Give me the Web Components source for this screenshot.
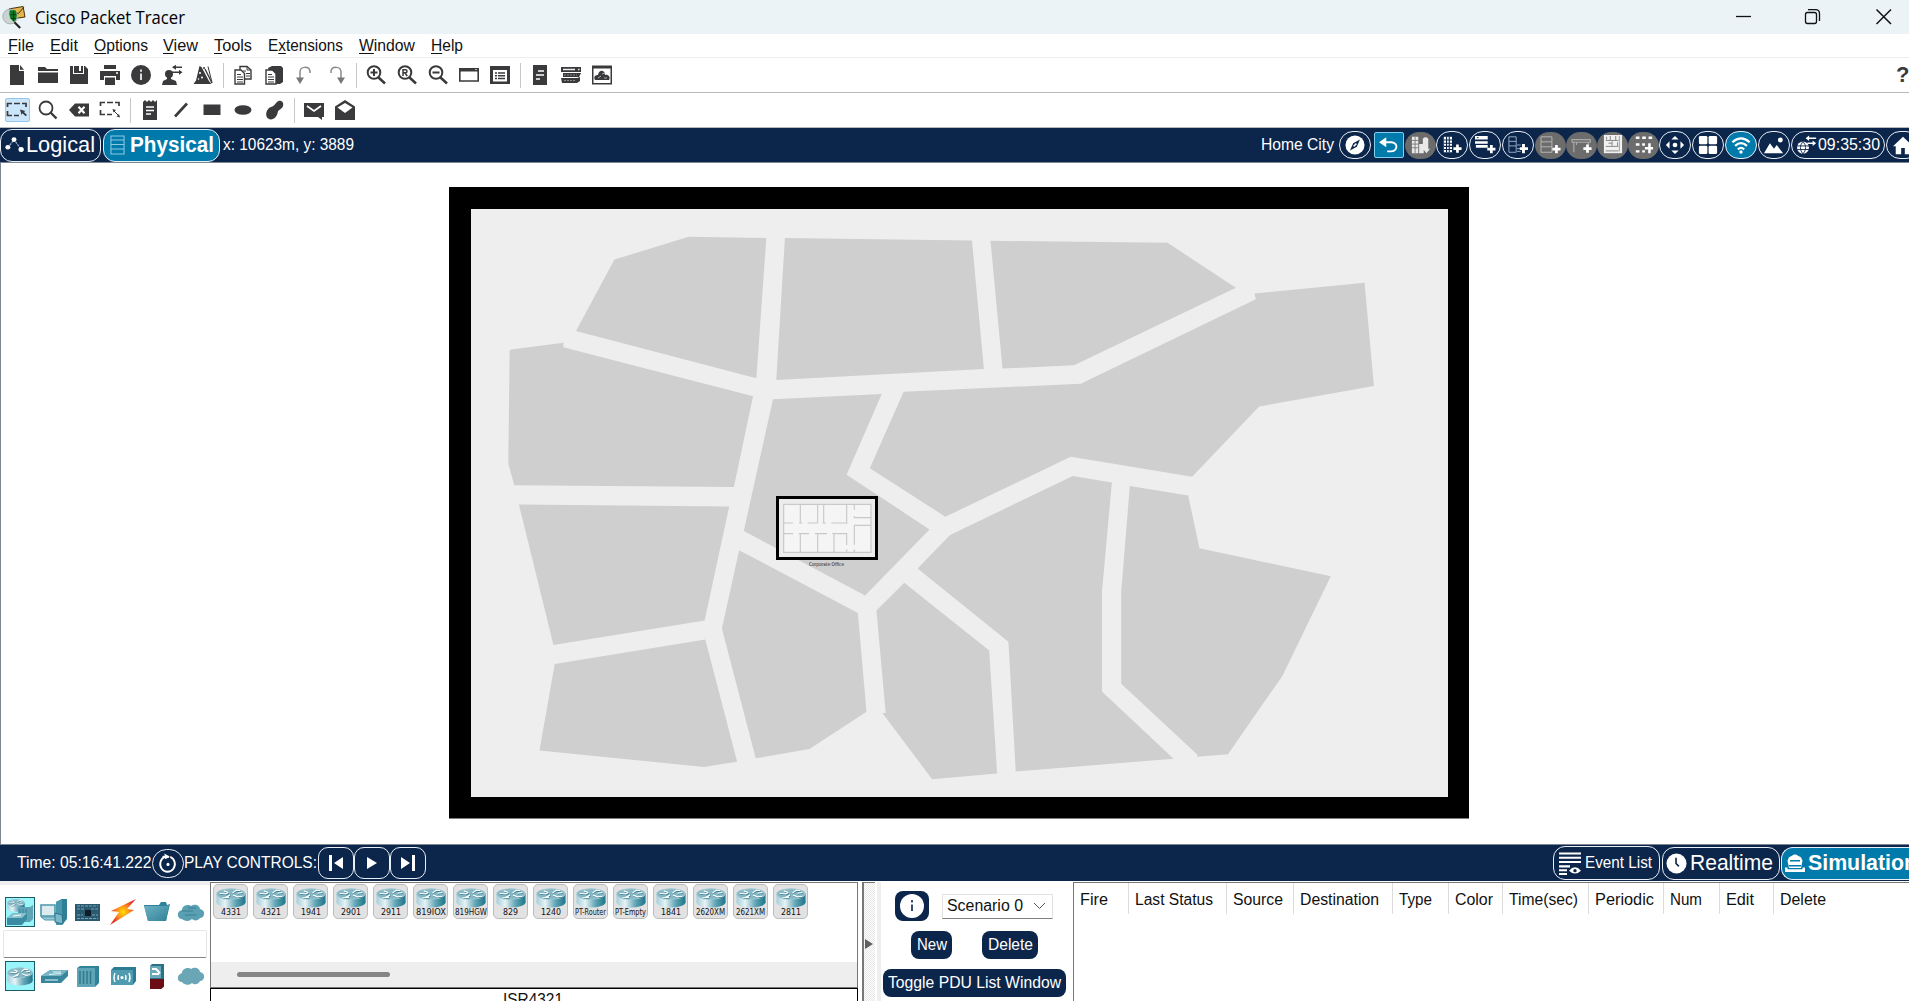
<!DOCTYPE html>
<html lang="en">
<head>
<meta charset="utf-8">
<title>Cisco Packet Tracer</title>
<style>
html,body{margin:0;height:100%;overflow:hidden;background:#fff}
</style>
</head>
<body>
<pt-app></pt-app>
<script>
const D='#3a3a3c';
const router=`<ellipse cx="14.5" cy="15" rx="14" ry="5.500" fill="url(#rb)"/><path d="M.5 6v9h28V6z" fill="url(#rb)"/><ellipse cx="14.5" cy="6.3" rx="14" ry="5.800" fill="#86b7c4"/><ellipse cx="14.5" cy="6.3" rx="13.6" ry="5.400" fill="none" stroke="#a8ced8" stroke-width=".6"/><path d="M3.500 5.800l6 .4 2-1.200M7.500 3l4.500 1.800M12.500 9.800l-6 .6M13.500 7.500L9 10M16 5.200l3.500-2.800 4 .2M16.500 7.500l4.500 1.800 4.500-.6M21 5.500l4.500-.9" fill="none" stroke="#2d7185" stroke-width="1" transform="translate(.4 .8)"/><path d="M3.500 5.800l6 .4 2-1.200M7.500 3l4.500 1.800M12.500 9.800l-6 .6M13.500 7.500L9 10M16 5.200l3.500-2.800 4 .2M16.500 7.500l4.500 1.800 4.500-.6M21 5.500l4.500-.9" fill="none" stroke="#fff" stroke-width="1.200"/>`;
const defs=`<defs><linearGradient id="rb"><stop offset="0" stop-color="#a5d0dc"/><stop offset=".3" stop-color="#e6f3f6"/><stop offset=".65" stop-color="#62a5b6"/><stop offset="1" stop-color="#1f7589"/></linearGradient><linearGradient id="tb" x2="1" y2="1"><stop offset="0" stop-color="#6fb2c3"/><stop offset="1" stop-color="#2f8299"/></linearGradient><radialGradient id="bolt"><stop offset="0" stop-color="#ffe000"/><stop offset=".5" stop-color="#ff8a1e"/><stop offset="1" stop-color="#e03226"/></radialGradient></defs>`;
/* name: [width, height, markup] */
const ICONS={
 app:[24,24,`<path d="M7.500 3L22 .5l2 11-14 2z" fill="#e3b54b" stroke="#3b2c0c"/><path d="M8 3.500l9 4.500 6-7" fill="none" stroke="#3b2c0c"/><circle cx="8.500" cy="11" r="7.700" fill="#c9d3d1" stroke="#a5b0ae"/><path d="M8 4.500h6c2 4 2 9-1 12-5-2-6-7-5-12z" fill="#0b7a22"/><path d="M9 9h6M9 13h6M12 5v11" stroke="#053d10"/><path d="M13 17l6 6" stroke="#222" stroke-width="2.200"/>`],
 new:[20,20,`<path d="M3 0h9v6h5v14H3z" fill="${D}"/><path d="M13 0l4 4.800h-4z" fill="${D}"/>`],
 open:[20,20,`<path d="M0 2h7l2 2h11v2H0zM0 7.500h20V18H0z" fill="${D}"/>`],
 save:[20,20,`<path d="M1 1h3v8h11V1h1l3 3v15H1z" fill="${D}"/><path d="M5 1h5v5h2V1h2v7H5z" fill="${D}"/>`],
 print:[20,20,`<path d="M4 0h12v4H4zM0 6h20v9h-4v-4H4v4H0zM5 12.500h10V20H5z" fill="${D}"/><path d="M16 8h2" stroke="#fff" stroke-width="1.500"/>`],
 info:[20,20,`<circle cx="10" cy="10" r="10" fill="${D}"/><path d="M10 4.500v2.200M10 8.500V15" stroke="#ddd" stroke-width="2"/>`],
 user:[20,20,`<circle cx="7" cy="9" r="4" fill="${D}"/><path d="M5 11h4v3l5 2 1 4H0l1-4 4-2z" fill="${D}"/><path d="M11 2.300h9M10 7.300h9" stroke="${D}" stroke-width="1.600"/><path d="M14-.2v5l-4-2.500zM17 4.800v5l3.500-2.500z" fill="${D}"/>`],
 wizard:[20,20,`<path d="M6.500 1l2 1 7.500 14 2.500 3H.5L3 15.500z" fill="${D}"/><path d="M12 4l7 14" stroke="${D}" stroke-width="1.400"/><path d="M15 1.500l4 16" stroke="${D}"/><circle cx="7" cy="8" r="1" fill="#fff"/><circle cx="9" cy="12.500" r="1" fill="#fff"/><circle cx="5.500" cy="14" r=".8" fill="#fff"/><circle cx="11" cy="3" r="1" fill="${D}"/>`],
 copy:[20,20,`<g fill="#fff" stroke="${D}" stroke-width="1.400"><path d="M7 1.500h7l4 3.500v9H7z"/><path d="M2 5h6l3.500 3.500V19H2z"/></g><path d="M14 1.500V5h4M4 9.500h4M4 12h6M4 14.500h6M4 17h6M10 6h3M13 8.500h4M13 11h4" stroke="${D}" fill="none"/>`],
 paste:[20,20,`<path d="M4 3l4-2h9l2 2v14l-3 2H9z" fill="${D}"/><path d="M2 5h6.500L12 8.500V19H2z" fill="#fff" stroke="${D}" stroke-width="1.400"/><path d="M4 9.500h4M4 12h6M4 14.500h6M4 17h6" stroke="${D}"/>`],
 undo:[20,20,`<path d="M5 14V7c0-6 9-6 10-1v2" fill="none" stroke="#8a8a8a" stroke-width="1.500"/><path d="M1 12.500h8L5 19z" fill="#777"/>`],
 redo:[20,20,`<path d="M15 14V7c0-6-9-6-10-1v2" fill="none" stroke="#8a8a8a" stroke-width="1.500"/><path d="M11 12.500h8L15 19z" fill="#777"/>`],
 zin:[20,20,`<circle cx="8" cy="7.500" r="6.300" fill="none" stroke="${D}" stroke-width="2"/><path d="M12.500 12.500l6.500 6" stroke="${D}" stroke-width="2.500"/><path d="M4.500 7.500h7M8 4v7" stroke="${D}" stroke-width="2"/>`],
 zr:[20,20,`<circle cx="8" cy="7.500" r="6.300" fill="none" stroke="${D}" stroke-width="2"/><path d="M12.500 12.500l6.500 6" stroke="${D}" stroke-width="2.500"/><path d="M6 11V4.800h2.500c2 0 2 3 0 3H6M8 8l2.300 3" fill="none" stroke="${D}" stroke-width="1.500"/>`],
 zout:[20,20,`<circle cx="8" cy="7.500" r="6.300" fill="none" stroke="${D}" stroke-width="2"/><path d="M12.500 12.500l6.500 6" stroke="${D}" stroke-width="2.500"/><path d="M4.500 7.500h7" stroke="${D}" stroke-width="2"/>`],
 view:[20,20,`<path d="M.8 4h18.400v12H.8z" fill="none" stroke="${D}" stroke-width="1.600"/><path d="M0 3h20v3.500H0z" fill="${D}"/><path d="M16 4.500h2" stroke="#bbb"/>`],
 list:[20,20,`<path d="M0 1h20v18H0z" fill="${D}"/><path d="M3 5h14v11.500H3z" fill="#fff"/><path d="M8 8h7M8 10.800h7M8 13.500h7M5 8h2M5 10.800h2M5 13.500h2" stroke="${D}" stroke-width="1.600"/>`],
 doc:[20,20,`<path d="M3 0h14v20H3z" fill="${D}"/><path d="M8 6h6M6 10h8M6 14h4" stroke="#fff" stroke-width="1.500"/>`],
 rack:[20,20,`<path d="M0 2h20v5H0zM2 8h18l-2 4H2zM0 13h16l3-1v4l-3 2H1z" fill="${D}"/><path d="M2 4.500h12M17 4.500h1.500" stroke="#eee" stroke-width="1.300"/><path d="M3 10h13M3 15.500h11" stroke="#888" stroke-dasharray="2 1"/>`],
 cloudwin:[20,20,`<path d="M0 .5h20v19H0z" fill="${D}"/><path d="M1.500 3.500h17V18h-17z" fill="#fff"/><path d="M3 15c-2-4 1-5 3-5 1-6 7-5 7 0 3-1 6 2 4 5z" fill="${D}"/><path d="M6 13l3-2M10 9l3-1M12 13h3" stroke="#aaa"/>`],
 sel:[22,20,`<g fill="none" stroke="${D}" stroke-width="1.700"><path d="M1.500 7V3.500H6M8 3.500h6M16 3.500h4V7M1.500 11v4.500H6M8 15.500h5"/></g><path d="M14 9.500l5.500 1.500-1.600 1L21 15l-1.300 1.300-3.200-3.100-1 1.800z" fill="${D}"/>`],
 search:[20,20,`<circle cx="8" cy="8" r="6.500" fill="none" stroke="${D}" stroke-width="1.800"/><path d="M12.500 12.500l6 6" stroke="${D}" stroke-width="2.400"/>`],
 del:[20,20,`<path d="M0 10l6-6.500h14v13H6z" fill="${D}"/><path d="M9.500 6.800l6 6.400M15.500 6.800l-6 6.400" stroke="#fff" stroke-width="2.200"/>`],
 resize:[22,20,`<g fill="none" stroke="${D}" stroke-width="1.700"><path d="M1.500 6V2.500H6M8 2.500h6M16 2.500h4V6M1.500 10v4.500H6M8 14.500h5"/></g><path d="M14 10l6 6" stroke="${D}"/><path d="M13.500 9l3.500 1-2.500 2.500zM21 17.500l-3.500-1 2.500-2.500z" fill="${D}"/>`],
 note:[20,20,`<path d="M3 2l2-2 2 2 2-2 2 2 2-2 2 2 2-2v20H3z" fill="${D}"/><path d="M6 7h8M6 10.500h8M6 14h5" stroke="#fff" stroke-width="1.400"/>`],
 line:[20,20,`<path d="M4 16.500L16 3.500" stroke="${D}" stroke-width="2.600"/>`],
 rect:[20,20,`<path d="M1.500 4.500h17v10.500h-17z" fill="${D}"/>`],
 oval:[20,20,`<ellipse cx="10" cy="10" rx="8.500" ry="4.800" fill="${D}"/>`],
 blob:[20,20,`<path d="M12.500 2.500c3-3.500 8-1 6.500 3.500-1 3.500-5 3.500-5.300 6.500-.6 4.500-5 8.500-9.200 6.300C.5 16.500 2 8.500 7 7c3-.8 3.500-2.500 5.500-4.500z" fill="${D}"/>`],
 mail:[20,20,`<path d="M0 3h20v14h-2v3l-4-3H0z" fill="${D}"/><path d="M3 6l7 5 7-5" fill="none" stroke="#fff" stroke-width="1.700"/>`],
 mailo:[20,20,`<path d="M0 6.500L10 0l10 6.500V20H0z" fill="${D}"/><path d="M2.500 7.500L10 3l7.500 4.500L10 13z" fill="#fff"/>`],
 nodes:[20,20,`<path d="M3 13L9.500 4 17 15" fill="none" stroke="#9fb4cc" stroke-width="1.300" stroke-dasharray="2.500 1"/><circle cx="9.500" cy="4" r="2.600" fill="#fff"/><circle cx="3" cy="12.500" r="2.600" fill="#fff"/><circle cx="17" cy="15" r="2.800" fill="#fff"/>`],
 shelf:[16,20,`<path d="M1 1h14v18H1zM1 5h14M1 9.500h14M1 14h14" fill="none" stroke="#8ecae3" stroke-width="1.100"/>`],
 compass:[22,22,`<circle cx="11" cy="11" r="10.500" fill="#fff"/><path d="M16.500 5L13 13l-7.500 4L9 9z" fill="#0c264b"/><path d="M9.500 12.500l3-3" stroke="#fff" stroke-width="1.600"/>`],
 back:[22,22,`<path d="M2.500 8H14c8 1 6 10-1 10H9" fill="none" stroke="#fff" stroke-width="2"/><path d="M0 8l8-5.500v11z" fill="#fff"/>`],
 city:[22,22,`<path d="M1 2h7v18H1zM9 10h5v10H9zM13 4q3-3 6 0v11h2l-4 5-4-5z" fill="#e9e9e9"/><path d="M1 6h7M1 10h7M1 14h7M4.500 2v18" stroke="#777"/>`],
 bplus:[22,22,`<path d="M2 2h9v17H2z" fill="#fff"/><path d="M2 5.500h9M2 9h9M2 12.500h9M2 16h9M5 2v17M8 2v17" stroke="#0c264b" stroke-width="1.200"/><path d="M17 10.500v9M12.500 15h9" stroke="#fff" stroke-width="3"/>`],
 rplus:[22,22,`<path d="M0 1h14v4H0zM0 7h14v2.500H0zM1 11h13v3H1z" fill="#fff"/><path d="M2 3h2" stroke="#0c264b"/><path d="M18 11v9M13.500 15.500h9" stroke="#fff" stroke-width="3"/>`],
 splus:[22,22,`<path d="M1 2h8v17H1zM1 7h8M1 12h8" fill="none" stroke="#9fb4cc"/><path d="M10 11h4M10 15h4M10 18h4" stroke="#9fb4cc"/><path d="M17 10v10M13 15h9" stroke="#fff" stroke-width="3.200"/>`],
 shplus:[22,22,`<path d="M0 2h12v17H0zM0 7.500h12M0 13h12" fill="none" stroke="#bbb"/><path d="M17 11v9M12.500 15.500h9" stroke="#fff" stroke-width="3"/>`],
 tplus:[22,22,`<path d="M0 5h20v3H0zM2 8v11M18 8v11M5 8v3" fill="none" stroke="#aaa" stroke-width="1.300"/><path d="M17 10.500v9M12.500 15h9" stroke="#fff" stroke-width="3"/>`],
 cab:[22,22,`<path d="M1 0h20v20H1z" fill="#f1f1f1"/><path d="M3 6h14M3 12.500h14M3 17.500h14M8 1v5M14 1v5M4 2v3M10 7v5M16 8v4M6 9h4" stroke="#888" stroke-width="1.100"/><path d="M18 1v17" stroke="#999"/>`],
 dots:[22,22,`<path d="M2 3h18M2 10.500h10M2 18h10" stroke="#fff" stroke-width="2.600" stroke-dasharray="4 3"/><path d="M17 9v11M12 14.500h9" stroke="#fff" stroke-width="2.800"/>`],
 move:[22,22,`<path d="M11 1l4 4H7zM11 21l4-4H7zM1 11l4-4v8zM21 11l-4-4v8z" fill="#fff"/><circle cx="11" cy="11" r="2.600" fill="#fff"/>`],
 grid:[22,22,`<g fill="#fff"><rect x="1" y="1" width="9.300" height="9.300" rx="1.500"/><rect x="11.700" y="1" width="9.300" height="9.300" rx="1.500"/><rect x="1" y="11.700" width="9.300" height="9.300" rx="1.500"/><rect x="11.700" y="11.700" width="9.300" height="9.300" rx="1.500"/></g>`],
 wifi:[22,22,`<g fill="none" stroke="#fff" stroke-width="2.500"><path d="M1.500 8q9.500-8.500 19 0M4.500 12q6.500-6 13 0M7.500 15.700q3.500-3 7 0"/></g><circle cx="11" cy="18.800" r="1.900" fill="#fff"/>`],
 mtn:[22,22,`<path d="M0 20l6.500-11 4.500 6 3-4 7 9z" fill="#fff"/><circle cx="18" cy="5.500" r="2.700" fill="#fff"/>`],
 globe:[24,22,`<circle cx="8" cy="14" r="6.800" fill="#fff"/><path d="M1 12h14M1 16h14M8 7q-6 7 0 14M8 7q6 7 0 14" fill="none" stroke="#0c264b"/><path d="M13 3.500h10M13 9h8" stroke="#fff" stroke-width="1.700"/><path d="M15 .5v6l-4-3zM19 6v6l4-3z" fill="#fff"/>`],
 home:[22,22,`<path d="M0 12L11 1l11 11h-3v9h-6v-7H9v7H3v-9z" fill="#fff"/>`],
 reset:[24,24,`<path d="M8.500 5.200a8 8 0 1 0 6 0" fill="none" stroke="#fff" stroke-width="2"/><path d="M6 5h7" stroke="#fff" stroke-width="2"/><path d="M8 1.500l6 3.500-5 2.500z" fill="#fff"/><circle cx="12" cy="13" r="1.700" fill="#fff"/>`],
 prev:[18,18,`<path d="M2 1h3v16H2zM16 3v12L7 9z" fill="#fff"/>`],
 play:[18,18,`<path d="M4 3v12l10-6z" fill="#fff"/>`],
 next:[18,18,`<path d="M13 1h3v16h-3zM2 3v12l9-6z" fill="#fff"/>`],
 events:[22,24,`<path d="M0 1.500h22M0 6h22M0 10.500h22M0 15h11M0 19h8M0 23h8" stroke="#fff" stroke-width="2.200"/><path d="M10 19.500q6-7 12 0-6 6-12 0z" fill="#fff"/><circle cx="16" cy="19.500" r="1.700" fill="#0c264b"/>`],
 clock:[22,22,`<circle cx="11" cy="11" r="10.500" fill="#fff"/><path d="M10.500 5v6l3 3" fill="none" stroke="#0c264b" stroke-width="1.700"/>`],
 sim:[20,20,`<path d="M7 2q3-3 6 0l3 1.500 1.500 4-1.500 8H4l-1.500-8L4 3.500zM0 15h2.500v2h15v-2H20v5H0z" fill="#fff"/><path d="M5 7.500h10M4 13h12" stroke="#007aaa" stroke-width="1.500"/>`],
 netdev:[28,28,`<g transform="translate(1 1) scale(.62)">${router}</g><path d="M12 9h12l3-2v14l-3 3H12z" fill="#5fa5b7"/><path d="M14 11v10M17 11v10M20 11v10" stroke="#397f92"/><path d="M1 20l6-5h14v6l-5 6H1z" fill="#3b8ca2"/><path d="M1 20l6-5h14l-5 5z" fill="#86c1ce"/><path d="M7 18l8-1" stroke="#fff"/>`],
 pc:[28,28,`<path d="M16 4l6-3h5v20l-5 6h-6z" fill="#2f8097"/><path d="M16 4l6-3v26h-6z" fill="#4a98ad"/><path d="M1 7h14v11H1z" fill="#dcebef" stroke="#4b98ac" stroke-width="1.600"/><path d="M1 19h14l3 3H5z" fill="#9acbd7" stroke="#4b98ac"/><path d="M15 15l7 2 1 9-8-2z" fill="#7ab9c9" stroke="#2f7388"/>`],
 board:[28,28,`<path d="M1 6h25v17H1z" fill="#2b5a70"/><path d="M3 8h21M3 11h7M17 11h7M3 20.500h21M3 17h6M18 17h6" stroke="#6ea7b8" stroke-width="1.100" stroke-dasharray="3 1"/><path d="M11 12h6v6h-6z" fill="#101c28"/>`],
 bolt:[28,28,`<path d="M27 1L2 13l8 1L1 27l24-15-7-1z" fill="url(#bolt)"/>`],
 folder:[28,28,`<path d="M1 7h15l2-3h5l1 3 3-1-4 17H5z" fill="#2f8299"/><path d="M1 8h22l3-1-3 16H5z" fill="url(#tb)"/>`],
 cloud:[28,28,`<path d="M5 21c-5 0-6-8 0-9 0-5 7-6 9-4 4-3 9 0 9 3 6 1 5 9 0 9-2 3-6 3-8 1-3 3-8 2-10 0z" fill="#5aa0b3"/><path d="M5 13h11M8 17h12M11 10h8" stroke="#3a7e91"/>`],
 cloud2:[28,28,`<path d="M5 20c-5 0-6-7 0-9 0-5 7-6 9-4 4-3 9 0 9 3 6 1 5 9 0 9-2 4-6 4-8 2-3 3-8 2-10-1z" fill="#6aa6b5"/>`],
 routerbig:[28,28,`<g transform="translate(1 5) scale(.9)">${router}</g>`],
 switch:[28,28,`<path d="M1 14l9-6h18v6l-7 7H1z" fill="#37869c"/><path d="M1 14l9-6h18l-7 6z" fill="#78b6c5"/><path d="M9 12.500l12-1M13 10h8M5 18h13" stroke="#e8f5f7"/>`],
 hub:[28,28,`<path d="M3 6l3-2h19v17l-4 4H3z" fill="#2f8299"/><path d="M3 6h18v19H3z" fill="#5ea5b7"/><path d="M6 9v13M9.500 9v13M13 9v13M16.500 9v13" stroke="#36788c" stroke-width="1.500"/>`],
 wap:[28,28,`<path d="M2 8l3-3h22v14l-3 4H2z" fill="#2b7c93"/><path d="M2 8h22v15H2z" fill="#4f9bb0"/><path d="M6 11q-2 4.500 0 9M9.500 13q-1 2.500 0 5M16.500 13q1 2.500 0 5M20 11q2 4.500 0 9" fill="none" stroke="#fff" stroke-width="1.400"/><circle cx="13" cy="15.500" r="1.600" fill="#fff"/>`],
 fw:[28,28,`<path d="M7 4l2-2h12v23l-3 2H7z" fill="#2c7186"/><path d="M7 4h11v12H7z" fill="#6aa9b9"/><path d="M7 17h14v7l-3 3H7z" fill="#6c0d14"/><path d="M9 7h4l3 3M9 12h6l2-2" stroke="#fff" stroke-width="2" fill="none"/>`],
 device:[29,21,router]
};
const make=(name,css,html,extra)=>customElements.define(name,class extends HTMLElement{
 constructor(){super();this.attachShadow({mode:'open'})}
 connectedCallback(){this.shadowRoot.innerHTML=`<style>:host{box-sizing:border-box}*{box-sizing:border-box}${css}</style>`+(typeof html==='function'?html(this):html);if(extra)extra(this)}
});
/* sized vector icon */
make('pt-icon',`:host{display:block;flex:none;line-height:0}svg{display:block;overflow:visible}`,el=>{
 const [w,h,m]=ICONS[el.getAttribute('name')];
 const W=el.getAttribute('w')||w,H=el.getAttribute('h')||h;
 return `<svg width="${W}" height="${H}" viewBox="0 0 ${w} ${h}" preserveAspectRatio="none">${/url\(#/.test(m)?defs:''}${m}</svg>`});
make('pt-tool',`:host{display:flex;width:31px;height:100%;align-items:center;justify-content:center;flex:none}div{display:flex;width:25px;height:24px;align-items:center;justify-content:center;border-radius:2px}:host([active]) div{background:#cbe6fb;border:1px solid #94c7ee}`,el=>`<div><pt-icon name="${el.getAttribute('name')}"></pt-icon></div>`);
make('pt-sep',`:host{display:flex;justify-content:center;align-items:center;flex:none;width:9px;height:100%}i{width:1px;height:25px;background:#c8c8c8}`,`<i></i>`);
make('pt-toolbar',`:host{display:flex;padding-left:1.500px;background:#fff;border-bottom:1px solid #b9b9b9}`,`<slot></slot>`);
make('pt-title',`:host{display:flex;height:34px;background:#ebf3f7;align-items:center;padding-left:2px;font:17.500px "Open Sans",sans-serif;color:#000}.t{margin-left:10px;margin-top:-1px}.w{margin-left:auto;display:flex;width:178px;height:34px;align-items:center}svg{display:block}`,
`<pt-icon name="app" w="23" h="23"></pt-icon><pt-label class="t" w="150">Cisco Packet Tracer</pt-label><div class="w"><svg width="178" height="34" fill="none" stroke="#111" stroke-width="1.300"><path d="M5 16.500h15"/><rect x="74.500" y="12.500" width="11" height="11" rx="2"/><path d="M77 9.700h7.500q4 0 4 4V21"/><path d="M145.500 9.500l14.500 14.500M160 9.500L145.500 24" stroke-width="1.500"/></svg></div>`);
make('pt-menu',`:host{display:flex;gap:15.800px;padding:1px 8px 0;height:24px;align-items:center;border-bottom:1px solid #ededed;background:#fff;font:16px "Liberation Sans",Arial,sans-serif;color:#111}u{text-underline-offset:2px}`,
[['<u>F</u>ile',26],['<u>E</u>dit',28],['<u>O</u>ptions',54],['<u>V</u>iew',35],['<u>T</u>ools',38],['E<u>x</u>tensions',75],['<u>W</u>indow',56],['<u>H</u>elp',32]].map(a=>`<pt-label w="${a[1]}">${a[0]}</pt-label>`).join(''));
/* rounded button used in both navy bars */
make('pt-pill',`:host{display:flex;flex:none;align-items:center;justify-content:center;border:1px solid #e8eef5;border-radius:14px;background:#0c264b;color:#fff;height:28px;width:32px;margin-right:1px;font:16px "Liberation Sans",Arial,sans-serif}
:host([tone=gray]){background:#6c6c6c;border-color:#6c6c6c;width:31px;margin-right:0;border-radius:15px;height:27px}:host([tone=blue]){background:#007aaa}:host([tone=sq]){background:#007aaa;border-color:#7fd0ee;border-radius:2px;height:26px;width:30px;margin:0 1px 0 2px}
:host([tab]){height:33px;justify-content:flex-start;border-radius:12px;margin-right:0}`,`<slot></slot>`);
const navIcons=[['compass'],['back','sq'],['city','gray'],['bplus'],['rplus'],['splus'],['shplus','gray'],['tplus','gray'],['cab','gray'],['dots','gray'],['move'],['grid'],['wifi','blue'],['mtn']];
make('pt-nav',`:host{display:flex;height:34px;background:#0c264b;align-items:center;color:#fff;overflow:hidden;font:16px "Liberation Sans",Arial,sans-serif}:host>*,.xy,.city{flex:none}.xy{margin-left:3px;width:131px;overflow:hidden}.city{margin-left:907px;margin-right:5px}.log{width:101px;padding-left:4px;margin-right:2px}.phy{width:117px;padding-left:6px}.big{font-size:22px}.b{font-weight:bold;margin-left:5px}.clk{width:94px;margin-left:0}.home{width:34px;padding-left:6px;justify-content:flex-start}`,
`<pt-pill tab class="log"><pt-icon name="nodes" w="19" h="18"></pt-icon><pt-label class="big" w="69" style="margin-left:2px">Logical</pt-label></pt-pill><pt-pill tab tone="blue" class="phy"><pt-icon name="shelf" w="15" h="20"></pt-icon><pt-label class="big b" w="84">Physical</pt-label></pt-pill><div class="xy"><pt-label w="131">x: 10623m, y: 3889</pt-label></div><pt-label class="city" w="73">Home City</pt-label>`+
navIcons.map(([n,t])=>`<pt-pill ${t?`tone="${t}"`:''}><pt-icon name="${n}" w="20" h="20"></pt-icon></pt-pill>`).join('')+
`<pt-pill class="clk"><pt-icon name="globe" w="21" h="20"></pt-icon><pt-label w="62" style="margin-left:1px">09:35:30</pt-label></pt-pill><pt-pill class="home"><pt-icon name="home" w="20" h="19"></pt-icon></pt-pill>`);
const blocks=['263,195 375,139 492,142 477,486 205,370','520,142 802,148 820,463 507,490','830,149 1097,154 1200,264 956,454 848,462','105,416 186,399 186,410 472,530 443,752 112,748 103,695','1228,278 1394,252 1408,505 1235,555 1134,727 951,678 762,825 648,706 699,519 966,499 1230,292','502,537 666,524 613,722 738,856 641,1018 458,860','119,795 436,800 399,1079 171,1139','173,1186 400,1126 448,1425 398,1438 150,1398','451,907 630,1061 643,1303 557,1394 476,1417 425,1099','700,987 828,1153 840,1454 742,1468 667,1306 672,1306 658,1055','954,725 1013,741 998,1010 998,1253 1106,1418 868,1449 857,1131 720,952 769,870','1040,750 1128,773 1145,902 1343,971 1270,1215 1188,1407 1141,1413 1142,1408 1027,1234 1027,1010'];
make('pt-map',`:host{display:block;height:683px;border:1px solid #7d8590;border-right:0;background:#fff}svg{display:block}`,
`<svg width="1908" height="681" viewBox="1 163 1908 681"><path d="M449 187h1020v631.500H449z"/><path d="M471 209h977v588H471z" fill="#eee"/><g transform="translate(440 180) scale(.66327 .40816)" fill="#cfcfcf">${blocks.map(b=>`<polygon points="${b}"/>`).join('')}</g>
<path d="M776 496h102v64H776z"/><path d="M779 499h96v58h-96z" fill="#ececec"/><g transform="translate(740 480) scale(.33333)"><path d="M131 73h262v144H131z" fill="#f5f5f5" stroke="#c9c9c9" stroke-width="3.500"/><path d="M181 73v55M233 73v55M251 73v55M320 73v58M131 129h28M177 129h10M203 129h30M248 129h10M274 129h46M343 73v17M343 108v5h50M343 194v-58h50M343 208v9M131 161h28M176 161h31M225 161h36M277 161h43v34M181 161v56M233 161v56M282 161v56M320 208v9" fill="none" stroke="#c9c9c9" stroke-width="3.500"/></g>
<text x="809" y="566" font-family="DejaVu Sans,sans-serif" font-size="5" textLength="35" lengthAdjust="spacingAndGlyphs" fill="#111">Corporate Office</text></svg>`);
make('pt-playbar',`:host{display:flex;height:36px;background:#0c264b;align-items:center;color:#fff;padding-left:17px;overflow:hidden;font:16px "Liberation Sans",Arial,sans-serif}.c{width:32px;height:29px;border-radius:15px;margin:0}.p{width:36px;height:32px;margin:0;border-radius:10px}.ev{margin-left:auto;width:107px;height:34px;padding-left:5px;margin-right:2px}.rt{width:118px;padding-left:3px;margin-right:1px}.sm{width:128px;padding-left:3px;border-right:0;border-radius:12px 0 0 12px}.big{font-size:22px;margin-left:3px}.b{font-weight:bold}`,
`<pt-label w="134.500">Time: 05:16:41.222</pt-label><pt-pill class="c"><pt-icon name="reset" w="22" h="23"></pt-icon></pt-pill><pt-label w="133">PLAY CONTROLS:</pt-label><pt-pill class="p" style="margin-left:1px"><pt-icon name="prev"></pt-icon></pt-pill><pt-pill class="p"><pt-icon name="play"></pt-icon></pt-pill><pt-pill class="p"><pt-icon name="next"></pt-icon></pt-pill><pt-pill tab class="ev"><pt-icon name="events" w="22" h="23"></pt-icon><pt-label w="67" style="margin-left:4px">Event List</pt-label></pt-pill><pt-pill tab class="rt"><pt-icon name="clock" w="21" h="21"></pt-icon><pt-label class="big" w="83">Realtime</pt-label></pt-pill><pt-pill tab tone="blue" class="sm"><pt-icon name="sim" w="20" h="18"></pt-icon><pt-label class="big b" w="109">Simulation</pt-label></pt-pill>`);
make('pt-categories',`:host{display:flex;flex-direction:column;width:210px;border-top:4px solid #eee;background:#fff;flex:none}.r{display:flex;gap:4.200px;padding-left:5px;height:30px}.r div{width:30px;height:30px;display:flex;align-items:center;justify-content:center}.r .s{background:#98f6fb;border:1px solid #1b5b68}.a{margin-top:12px}.in{height:28px;width:204px;margin:3px 0 3px 3px;border:1px solid #e6e6e6;border-bottom-color:#858585;border-radius:2px}`,()=>{
 const row=a=>a.map((n,i)=>`<div class="${i?'':'s'}"><pt-icon name="${n}"></pt-icon></div>`).join('');
 return `<div class="r a">${row(['netdev','pc','board','bolt','folder','cloud'])}</div><div class="in"></div><div class="r">${row(['routerbig','switch','hub','wap','fw','cloud2'])}</div>`});
make('pt-device',`:host{display:flex;flex-direction:column;align-items:center;width:35px;height:35px;flex:none;border:1px solid #bdbdbd;border-radius:5px;background:#e2e2e2;padding-top:3px;font:8px "DejaVu Sans",sans-serif;color:#111}.l{line-height:10px;margin-top:-.5px}`,el=>`<pt-icon name="device" w="30" h="20"></pt-icon><pt-label class="l" w="${el.getAttribute('w')}">${el.getAttribute('model')}</pt-label>`);
const devs=[['4331',20],['4321',20],['1941',20],['2901',20],['2911',20],['819IOX',30],['819HGW',32],['829',15],['1240',20],['PT-Router',31],['PT-Empty',31],['1841',20],['2620XM',29],['2621XM',29],['2811',20]];
make('pt-devices',`:host{display:flex;flex-direction:column;width:648px;flex:none;border:1px solid #777;border-bottom:0;margin-top:1px}.d{display:flex;gap:5px;padding:1px 0 0 2px;height:79px}.s{height:26px;background:#eee;border-bottom:1px solid #777;padding:10px 0 0 26px}.s i{display:block;width:153px;height:5px;border-radius:3px;background:#858585}.n{flex:1;margin:0 -1px;border:1px solid #000;border-bottom:0;display:flex;justify-content:center;overflow:hidden;font:17px/20px "Liberation Sans",Arial,sans-serif;color:#111;padding:1px 2px 0 0}`,
`<div class="d">${devs.map(d=>`<pt-device model="${d[0]}" w="${d[1]}"></pt-device>`).join('')}</div><div class="s"><i></i></div><div class="n"><pt-label w="60">ISR4321</pt-label></div>`);
make('pt-splitter',`:host{display:flex;flex:none;width:23px;padding-left:4px;border-right:4px solid #eee;margin-top:1px}div{width:13px;border-left:2px solid #777;border-top:1px solid #777;background:repeating-conic-gradient(#e7e7e7 0 25%,#fff 0 50%) 0 0/2px 2px;padding-top:56px;background-color:#fff}i{display:block;width:0;border:5px solid transparent;border-left:8px solid #606060;border-right:0;margin-left:1px}`,`<div><i></i></div>`);
make('pt-button',`:host{display:flex;align-items:center;justify-content:center;background:#0c264b;color:#fff;border-radius:8px;height:28px;font:16px "Liberation Sans",Arial,sans-serif}`,`<slot></slot>`);
make('pt-scenario',`:host{display:flex;flex-direction:column;width:192px;flex:none;padding:10px 0 0 2px;font:16px "Liberation Sans",Arial,sans-serif;color:#111}.a{display:flex;align-items:center;height:30px;gap:13px;padding-left:12px}.a pt-button{width:34px;height:30px}.o{width:24px;height:24px;border-radius:50%;background:#fff;display:flex;align-items:center;justify-content:center}.c{width:111px;height:25px;border:1px solid #e2e2e2;border-bottom-color:#808080;display:flex;align-items:center;padding-left:4px;gap:10px}.b{display:flex;padding-left:28px;gap:30px;margin:10px 0}`,
`<div class="a"><pt-button><div class="o"><svg width="4" height="12"><path d="M2 0v2.500M2 4.500V11" stroke="#3a4d68" stroke-width="2"/></svg></div></pt-button><div class="c"><pt-label w="76">Scenario 0</pt-label><svg width="13" height="8" fill="none" stroke="#555"><path d="M1 1l5.500 5.500L12 1"/></svg></div></div><div class="b"><pt-button style="width:41px"><pt-label w="30">New</pt-label></pt-button><pt-button style="width:56px"><pt-label w="45">Delete</pt-label></pt-button></div><pt-button style="width:183px"><pt-label w="173">Toggle PDU List Window</pt-label></pt-button>`);
const cols=[['Fire',28,55],['Last Status',78,98],['Source',50,67],['Destination',79,98.5],['Type',33,56],['Color',38,54.5],['Time(sec)',69,86],['Periodic',59,75],['Num',32,55.5],['Edit',28,54.5],['Delete',46,100]];
make('pt-pdus',`:host{display:block;flex:1;border:1px solid #777;border-right:0;border-bottom:0;margin-top:1px;font:16px "Liberation Sans",Arial,sans-serif;color:#111;overflow:hidden}.h{display:flex;height:31px}.h div{flex:none;border-right:1px solid #dcdcdc;display:flex;align-items:center;padding:2px 0 0 6px}.h div:last-child{border:0}`,
`<div class="h">${cols.map(c=>`<div style="width:${c[2]}px"><pt-label w="${c[1]}">${c[0]}</pt-label></div>`).join('')}</div>`);
const tools=s=>s.split(' ').map(n=>n==='|'?'<pt-sep></pt-sep>':`<pt-tool name="${n}" ${n==='sel'?'active':''}></pt-tool>`).join('');
make('pt-app',`:host{display:flex;flex-direction:column;width:1909px;height:1001px;overflow:hidden;background:#fff}:host>*{flex:none}.t1,.t2{height:35px}.q{margin-left:auto;width:13px;font:bold 22px/33px "Liberation Sans",Arial,sans-serif;color:#3a3a3c}.low{display:flex;height:120px;overflow:hidden}`,
`<pt-title></pt-title><pt-menu></pt-menu><pt-toolbar class="t1">${tools('new open save print info user wizard | copy paste undo redo | zin zr zout view list | doc rack cloudwin')}<span class="q">?</span></pt-toolbar><pt-toolbar class="t2">${tools('sel search del resize | note line rect oval blob | mail mailo')}</pt-toolbar><pt-nav></pt-nav><pt-map></pt-map><pt-playbar></pt-playbar><div class="low"><pt-categories></pt-categories><pt-devices></pt-devices><pt-splitter></pt-splitter><pt-scenario></pt-scenario><pt-pdus></pt-pdus></div>`);
/* one-line text stretched to the width given in w */
make('pt-label',`:host{display:block;flex:none;white-space:nowrap}span{display:inline-block;transform-origin:0 50%}`,`<span><slot></slot></span>`,el=>{
 const s=el.shadowRoot.querySelector('span'),w=+el.getAttribute('w');
 const n=s.getBoundingClientRect().width;
 el.style.width=w+'px';if(n)s.style.transform=`scaleX(${w/n})`});
</script>
</body>
</html>
